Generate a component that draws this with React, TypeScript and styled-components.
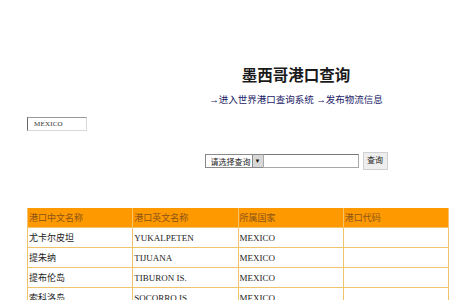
import { FunctionComponent } from 'react';
import styled, { createGlobalStyle } from 'styled-components';

const GlobalStyle = createGlobalStyle`
  html, body {
    margin: 0;
    padding: 0;
    background: #ffffff;
    overflow: hidden;
  }
  body {
    font-family: 'Liberation Serif', 'Noto Sans CJK SC', serif;
    color: #222222;
  }
`;

const Page = styled.div`
  width: 450px;
  height: 300px;
  overflow: hidden;
`;

const Container = styled.div`
  width: 538px;
  margin-left: 27px;
  padding-top: 66px;
  display: flex;
  flex-direction: column;
`;

const Title = styled.h1`
  margin: 0;
  height: 20px;
  text-align: center;
  font-size: 15.5px;
  line-height: 20px;
  font-weight: bold;
  color: #1a1a1a;
`;

const LinkRow = styled.div`
  margin-top: 6px;
  height: 16px;
  text-align: center;
  font-size: 9.5px;
  line-height: 16px;
  color: #1a1a66;

  & a {
    color: inherit;
    text-decoration: none;
  }
`;

const CountryBox = styled.div`
  margin-top: 9px;
  width: 60px;
  height: 14px;
  box-sizing: border-box;
  border: 1px solid #d8d8d8;
  border-left: 1px solid #666666;
  border-top: 1px solid #999999;
  font-size: 7px;
  line-height: 12px;
  padding-left: 6px;
  color: #333333;
  letter-spacing: 0.2px;
`;

const SearchRow = styled.div`
  margin-top: 21px;
  display: flex;
  justify-content: center;
  align-items: center;
`;

const SelectBox = styled.div`
  width: 58px;
  height: 14px;
  box-sizing: border-box;
  border: 1px solid #888888;
  border-right: none;
  display: flex;
  align-items: center;
  font-size: 8px;
  color: #222222;
  padding-left: 5px;
  overflow: hidden;
  white-space: nowrap;
`;

const SelectText = styled.span`
  flex: 1;
  overflow: hidden;
`;

const Arrow = styled.span`
  width: 10px;
  height: 12px;
  flex: none;
  background: #d8d8d8;
  border-left: 1px solid #888888;
  display: flex;
  align-items: center;
  justify-content: center;
  font-size: 6px;
  color: #111111;
`;

const TextInput = styled.div`
  width: 96px;
  height: 14px;
  box-sizing: border-box;
  border: 1px solid #aaaaaa;
  border-top: 1px solid #777777;
`;

const Button = styled.div`
  margin-left: 4px;
  width: 25px;
  height: 18px;
  box-sizing: border-box;
  background: #eeeeee;
  border: 1px solid #d0d0d0;
  font-size: 8px;
  line-height: 16px;
  text-align: center;
  color: #222222;
`;

const Table = styled.table`
  margin-top: 38px;
  width: 422px;
  border-collapse: collapse;
  table-layout: fixed;
  font-size: 9px;
`;

const HeadCell = styled.th`
  background: #ff9900;
  color: #8b5518;
  font-weight: normal;
  text-align: left;
  height: 19px;
  padding: 0 0 0 1px;
  border: 1px solid #f5c26b;
  border-top: none;
`;

const Cell = styled.td`
  height: 19px;
  padding: 0 0 0 1px;
  border: 1px solid #efc36a;
  color: #222222;
  white-space: nowrap;
`;

const rows = [
  ['尤卡尔皮坦', 'YUKALPETEN', 'MEXICO', ''],
  ['提朱纳', 'TIJUANA', 'MEXICO', ''],
  ['提布伦岛', 'TIBURON IS.', 'MEXICO', ''],
  ['索科洛岛', 'SOCORRO IS.', 'MEXICO', ''],
];

const App: FunctionComponent = (): JSX.Element => (
  <Page>
    <GlobalStyle />
    <Container>
      <Title>墨西哥港口查询</Title>
      <LinkRow>
        <a href="#">→进入世界港口查询系统</a> <a href="#">→发布物流信息</a>
      </LinkRow>
      <CountryBox>MEXICO</CountryBox>
      <SearchRow>
        <SelectBox>
          <SelectText>请选择查询</SelectText>
          <Arrow>▼</Arrow>
        </SelectBox>
        <TextInput />
        <Button>查询</Button>
      </SearchRow>
      <Table>
        <thead>
          <tr>
            <HeadCell>港口中文名称</HeadCell>
            <HeadCell>港口英文名称</HeadCell>
            <HeadCell>所属国家</HeadCell>
            <HeadCell>港口代码</HeadCell>
          </tr>
        </thead>
        <tbody>
          {rows.map((row) => (
            <tr key={row[1]}>
              {row.map((value, i) => (
                <Cell key={i}>{value}</Cell>
              ))}
            </tr>
          ))}
        </tbody>
      </Table>
    </Container>
  </Page>
);

export default App;
